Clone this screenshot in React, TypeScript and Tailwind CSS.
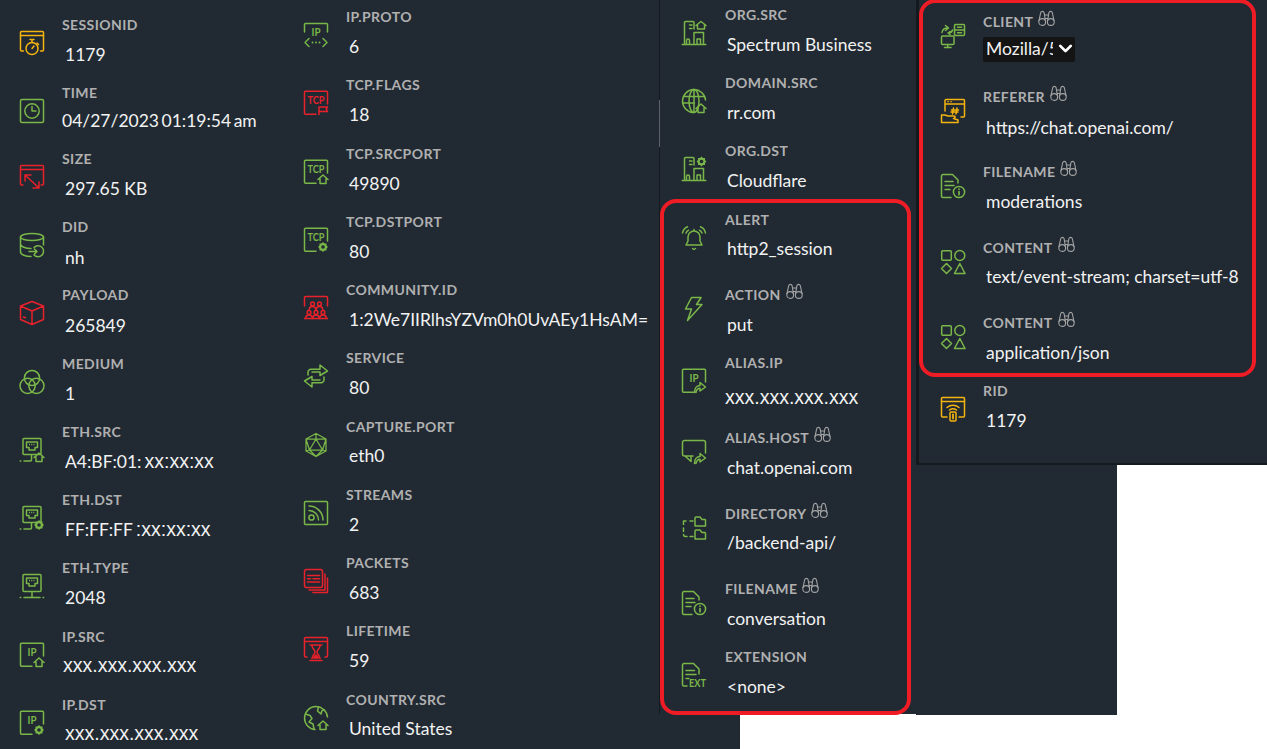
import type { ReactNode } from "react";
import { ChevronDown } from "lucide-react";

const GREEN = "text-[#7ab648]";
const RED = "text-[#e8212b]";
const YELLOW = "text-[#f5b40f]";
const BG = "#212a33";

function Svg({ color, children }: { color: string; children: ReactNode }) {
  return (
    <svg
      width="24"
      height="24"
      viewBox="0 0 24 24"
      fill="none"
      stroke="currentColor"
      strokeWidth="1.5"
      strokeLinecap="round"
      strokeLinejoin="round"
      className={`shrink-0 overflow-visible ${color}`}
      aria-hidden="true"
    >
      {children}
    </svg>
  );
}

// small badge text inside the protocol icons
function Tag({ x, y, w, children }: { x: number; y: number; w: number; children: string }) {
  return (
    <text
      x={x}
      y={y}
      fontSize="12"
      fontWeight="700"
      fontFamily="Lato, sans-serif"
      fill="currentColor"
      stroke="none"
      textLength={w}
      lengthAdjust="spacingAndGlyphs"
    >
      {children}
    </text>
  );
}

const Home = () => <path d="M14 19.5 19 15l5 4.5M16 18.5V23.5h6v-5" />;

const Gear = ({ cx = 19, cy = 19 }: { cx?: number; cy?: number }) => (
  <>
    <rect x={cx - 3.5} y={cy - 3.5} width="7" height="7" fill="currentColor" stroke="none" />
    <rect x={cx - 3.5} y={cy - 3.5} width="7" height="7" fill="currentColor" stroke="none" transform={`rotate(45 ${cx} ${cy})`} />
    <circle cx={cx} cy={cy} r="1.8" fill={BG} stroke="none" />
  </>
);

const Forward = () => (
  <path d="M12.5 23.5c0-4.5 2.5-7 5.5-7v-3l5.5 4.5-5.5 4v-2.8c-2 0-3.5 1.3-4 4.3" />
);

const Frame = () => <path d="M12 23.3H1.5a1 1 0 0 1-1-1v-21a1 1 0 0 1 1-1h21a1 1 0 0 1 1 1V13" />;

const Window = () => (
  <>
    <path d="M3 20H1.5a1 1 0 0 1-1-1V1.5a1 1 0 0 1 1-1h21a1 1 0 0 1 1 1V19a1 1 0 0 1-1 1H21" />
    <path d="M.5 4.5h23" />
  </>
);

const Port = ({ h = 17 }: { h?: number }) => (
  <>
    <rect x="3" y=".5" width="18" height={h} rx="1" />
    <path d="M6.5 4h11v5.5h-2.5V12H9V9.5H6.5z" />
    <path d="M9 6.5h6" strokeDasharray="1 1.2" strokeLinecap="butt" />
  </>
);

const Person = ({ x, y }: { x: number; y: number }) => (
  <>
    <circle cx={x} cy={y} r="1.9" />
    <path d={`M${x - 3.3} ${y + 6}c0-4.6 6.6-4.6 6.6 0`} />
  </>
);

const Globe = () => <path d="M23.5 11A11.5 11.5 0 1 0 11 23.5" />;

const Building = () => (
  <>
    <path d="M2.5 23V1.5a1 1 0 0 1 1-1H11a1 1 0 0 1 1 1V8M.2 23.5h23.6M12 23V11.5h9.5V23" />
    <path d="M7.5 4H10M7.5 7.5H10M4.5 23v-3.5a1.5 1.5 0 0 1 3 0V23M15 23v-5h3.5v5" />
  </>
);

const Doc = () => <path d="M10 23.5H2a1.5 1.5 0 0 1-1.5-1.5V2A1.5 1.5 0 0 1 2 .5h9.5L17 6v3" />;

const Shapes = () => (
  <>
    <rect x=".7" y=".7" width="9.6" height="9.6" rx="1" />
    <circle cx="18.8" cy="5.5" r="5" />
    <path d="M5.5 13.5 10.5 18.5 5.5 23.5.5 18.5zM18.8 13.5l5.2 10H13.5z" />
  </>
);

const FileInfo = () => (
  <Svg color={GREEN}>
    <Doc />
    <path d="M4 7.5h8M4 11.5h9M4 15.5h5" />
    <circle cx="18" cy="18" r="5.6" />
    <path d="M18 17.5v3.2" strokeWidth="1.7" />
    <path d="M18 15v.2" strokeWidth="1.7" />
  </Svg>
);

const Contents = () => (
  <Svg color={GREEN}>
    <Shapes />
  </Svg>
);

const icons: Record<string, ReactNode> = {
  session: (
    <Svg color={YELLOW}>
      <path d="M3.5 20H1.5a1 1 0 0 1-1-1V1.5a1 1 0 0 1 1-1h21a1 1 0 0 1 1 1V19a1 1 0 0 1-1 1h-2" />
      <path d="M.5 4.5h23" />
      <circle cx="12" cy="17.5" r="6" />
      <path d="M10 8.5h4M12 8.5v3M12 17.5l2-2.5M17 12l1.5 1.5" />
    </Svg>
  ),
  time: (
    <Svg color={GREEN}>
      <rect x=".5" y=".5" width="23" height="23" rx="1.5" />
      <circle cx="12" cy="12" r="7.2" />
      <path d="M12 7.5V12h4" />
    </Svg>
  ),
  size: (
    <Svg color={RED}>
      <Window />
      <path d="M5 10l14 13M5 16v-6h6M19 17v6h-6" />
    </Svg>
  ),
  did: (
    <Svg color={GREEN}>
      <ellipse cx="12" cy="4" rx="11.5" ry="3.6" />
      <path d="M.5 4v15c0 2.5 5 4.5 10.5 4.5M23.5 4v8M.5 11c0 2.5 5 4.6 10.5 4.6" />
      <path d="M14 14.5a5.5 5.5 0 1 1 0 7.5M9 18.5h8M14.5 16l2.5 2.5-2.5 2.5" />
    </Svg>
  ),
  payload: (
    <Svg color={RED}>
      <path d="M12 .5 23.5 5v13.5L12 23.5.5 18.5V5zM.5 5 12 10l11.5-5M12 10v13.5M3.5 16l2 .8" />
    </Svg>
  ),
  medium: (
    <Svg color={GREEN}>
      <circle cx="12" cy="8" r="7.6" />
      <circle cx="7.6" cy="15.8" r="7.6" />
      <circle cx="16.4" cy="15.8" r="7.6" />
    </Svg>
  ),
  ethSrc: (
    <Svg color={GREEN}>
      <Port h={16} />
      <path d="M.2 23h.6M4 23h6.5a1 1 0 0 0 1-1v-5" />
      <Home />
    </Svg>
  ),
  ethDst: (
    <Svg color={GREEN}>
      <Port h={16} />
      <path d="M.2 23h.6M4 23h6.5a1 1 0 0 0 1-1v-5" />
      <Gear />
    </Svg>
  ),
  ethType: (
    <Svg color={GREEN}>
      <Port h={17} />
      <path d="M12 18v5M.2 23.4h.6M4 23.4h16M23 23.4h.6" />
    </Svg>
  ),
  ipSrc: (
    <Svg color={GREEN}>
      <Frame />
      <Tag x={7.5} y={13} w={9}>IP</Tag>
      <Home />
    </Svg>
  ),
  ipDst: (
    <Svg color={GREEN}>
      <Frame />
      <Tag x={7.5} y={13} w={9}>IP</Tag>
      <Gear />
    </Svg>
  ),
  ipProto: (
    <Svg color={GREEN}>
      <path d="M.5 9V1.5a1 1 0 0 1 1-1h21a1 1 0 0 1 1 1V9" />
      <Tag x={7.5} y={12.5} w={9}>IP</Tag>
      <path d="M5 15.5 1 19.5l4 4M19 15.5l4 4-4 4" />
      <path d="M8.5 19.5h.1M12 19.5h.1M15.5 19.5h.1" strokeWidth="1.8" />
    </Svg>
  ),
  tcpFlags: (
    <Svg color={RED}>
      <Frame />
      <Tag x={3.5} y={13} w={17}>TCP</Tag>
      <path d="M15 23.5V16h8.5l-1.3 2.2 1.3 2.3H15" />
    </Svg>
  ),
  tcpSrc: (
    <Svg color={GREEN}>
      <Frame />
      <Tag x={3.5} y={13} w={17}>TCP</Tag>
      <Home />
    </Svg>
  ),
  tcpDst: (
    <Svg color={GREEN}>
      <Frame />
      <Tag x={3.5} y={13} w={17}>TCP</Tag>
      <Gear />
    </Svg>
  ),
  community: (
    <Svg color={RED}>
      <path d="M.5 10V1.5a1 1 0 0 1 1-1h21a1 1 0 0 1 1 1V10" />
      <Person x={8.5} y={8} />
      <Person x={15.5} y={8} />
      <Person x={5} y={16.5} />
      <Person x={12} y={16.5} />
      <Person x={19} y={16.5} />
      <path d="M.5 22.5h23" />
    </Svg>
  ),
  service: (
    <Svg color={GREEN}>
      <path d="M4 11V8.5a3 3 0 0 1 3-3.2h9V1l7.5 6-7.5 4.5V8H8" />
      <path d="M20 13v2.5a3 3 0 0 1-3 3.2H8V23L.5 17 8 12.5V16h8" />
    </Svg>
  ),
  capture: (
    <Svg color={GREEN}>
      <path d="M12 .5 22 6v12l-10 5.5L2 18V6zM12 6l6.5 11h-13zM12 .5V6M2 6h20M2 6l3.5 11M22 6l-3.5 11M2 18l3.5-1M22 18l-3.5-1M12 23.5 5.5 17M12 23.5 18.5 17" strokeWidth="1.25" />
    </Svg>
  ),
  streams: (
    <Svg color={GREEN}>
      <rect x=".5" y=".5" width="23" height="23" rx="1" />
      <circle cx="7.5" cy="16.5" r="2.6" />
      <path d="M5 9.5a9.5 9.5 0 0 1 9.5 9.5M5 5a14 14 0 0 1 14 14" />
    </Svg>
  ),
  packets: (
    <Svg color={RED}>
      <rect x=".5" y=".5" width="18" height="18" rx="2" />
      <path d="M3.5 6.5h12M3.5 13h12M3.5 9.8h3M9 9.8h6.5" />
      <path d="M21 5v16H5M23.5 9v14.5H9" />
    </Svg>
  ),
  lifetime: (
    <Svg color={RED}>
      <path d="M3 20H1.5a1 1 0 0 1-1-1V1.5a1 1 0 0 1 1-1h21a1 1 0 0 1 1 1V19a1 1 0 0 1-1 1H21" />
      <path d="M.5 4.5h23M6 8h12M6 23.5h12M8 8.5c0 3.5 3 4 3 6.5s-3 3-3 6.5M16 8.5c0 3.5-3 4-3 6.5s3 3 3 6.5" />
      <path d="M9.5 21h5l-2.5-3z" fill="currentColor" />
    </Svg>
  ),
  country: (
    <Svg color={GREEN}>
      <Globe />
      <path d="M1.5 8 6 9.5 8 12.5 5 16l4 2 1 5M14.5 1l-1 4 3.5 3 1-3.5L20.5 4" />
      <Home />
    </Svg>
  ),
  orgSrc: (
    <Svg color={GREEN}>
      <Building />
      <path d="M14 4.5 19 .5l5 4M15.5 3.5V8h7V3.5" />
    </Svg>
  ),
  domain: (
    <Svg color={GREEN}>
      <Globe />
      <ellipse cx="12" cy="12" rx="5" ry="11.5" />
      <path d="M12 .5v23M1.5 7.5h21M.5 14h12" />
      <Home />
    </Svg>
  ),
  orgDst: (
    <Svg color={GREEN}>
      <Building />
      <Gear cx={19.5} cy={4.5} />
    </Svg>
  ),
  alert: (
    <Svg color={GREEN}>
      <path d="M12 5a6 6 0 0 1 6 6v4l2 4H4l2-4v-4a6 6 0 0 1 6-6zM10.5 22.5l1.5 1 1.5-1M12 3.5V5" />
      <path d="M.5 7C1 4 3 2 5.5.8M23.5 7C23 4 21 2 18.5.8M4 7c.4-1.2 1.2-2 2.5-2.8M20 7c-.4-1.2-1.2-2-2.5-2.8" />
    </Svg>
  ),
  action: (
    <Svg color={GREEN}>
      <path d="M9.5.5h9.5l-4.5 7H20L5.5 23.5l4-11.5H3.5z" />
    </Svg>
  ),
  aliasIp: (
    <Svg color={GREEN}>
      <Frame />
      <Tag x={7.5} y={12.5} w={9}>IP</Tag>
      <Forward />
    </Svg>
  ),
  aliasHost: (
    <Svg color={GREEN}>
      <path d="M11 16H2.5a2 2 0 0 1-2-2V2.5a2 2 0 0 1 2-2h19a2 2 0 0 1 2 2V13M3 16l6 5.5M9 16v5.5" />
      <Forward />
    </Svg>
  ),
  directory: (
    <Svg color={GREEN}>
      <path d="M1.5 5v3.5M1.5 12v3.5M1.5 18.5a2 2 0 0 0 2 2H5M1.5 5H4M8 5h3M8 20.5h3" />
      <path d="M13 10V2a1 1 0 0 1 1-1h4l2 2.5h3a1 1 0 0 1 .5.9V10zM13 23v-8a1 1 0 0 1 1-1h4l2 2.5h3a1 1 0 0 1 .5.9V23z" />
    </Svg>
  ),
  filename: <FileInfo />,
  extension: (
    <Svg color={GREEN}>
      <path d="M5 23H2a1.5 1.5 0 0 1-1.5-1.5V2A1.5 1.5 0 0 1 2 .5h9.5L17 6v5" />
      <path d="M4 7.5h8.5M4 11.5h10M4 15.5h3" />
      <Tag x={7} y={24} w={17}>EXT</Tag>
    </Svg>
  ),
  client: (
    <Svg color={GREEN}>
      <rect x=".5" y="12" width="12.5" height="8.5" rx="1" />
      <path d="M6.7 20.5v3M3.5 23.5h6.5" />
      <rect x="13.5" y=".5" width="10" height="11" rx="1" />
      <path d="M13.5 6h10M16.5 3.3h4M16.5 8.8h4" />
      <path d="M1 8.5c.5-3 2.5-4.5 5.5-4.5M4.5 1.5 7.5 4 4.5 6.5M11.5 6c-.5 2-2 3-4 3M9 7.5 7 9l2 1.5" />
    </Svg>
  ),
  referer: (
    <Svg color={YELLOW}>
      <path d="M4 12V1.5a1 1 0 0 1 1-1h17.5a1 1 0 0 1 1 1V17a1 1 0 0 1-1 1H20M4 5h19.5M7 2.8h.1M10 2.8h.1" />
      <path d="M12.5 9l-1 6M16 9l-1 6M10.5 11h7M10 13h7" />
      <path d="M.5 16h3.5l3 1h6c1.5 0 1.5 2-.5 2.5L17 21v2.5H.5z" />
    </Svg>
  ),
  content: <Contents />,
  rid: (
    <Svg color={YELLOW}>
      <path d="M6 20H1.5a1 1 0 0 1-1-1V1.5a1 1 0 0 1 1-1h21a1 1 0 0 1 1 1V19a1 1 0 0 1-1 1H18" />
      <path d="M.5 4.5h23M6 10.5c3.5-3 8.5-3 12 0M8.5 13c2-1.5 5-1.5 7 0" />
      <rect x="9" y="15" width="6" height="9" rx="1" />
      <path d="M12 17.5v4" strokeWidth="1.8" />
    </Svg>
  ),
};

function Binoculars() {
  return (
    <svg
      width="17"
      height="17"
      viewBox="0 0 17 17"
      fill="none"
      stroke="#a3a3a3"
      strokeWidth="1.1"
      className="ml-[5px] -mt-[2px] shrink-0"
      aria-hidden="true"
    >
      <circle cx="4.2" cy="12" r="3.4" />
      <circle cx="12.8" cy="12" r="3.4" />
      <path d="M.9 11 2.7 2.6a1.8 1.8 0 0 1 3.4 0L7.6 12M16.1 11 14.3 2.6a1.8 1.8 0 0 0-3.4 0L9.4 12M7 5h3M7.3 8.5h2.4" />
    </svg>
  );
}

type Field = {
  label: string;
  value: ReactNode;
  icon: string;
  h: string;
  search?: boolean;
  valueClass?: string;
};

const Masked = () => (
  <span className="font-['Liberation_Sans',sans-serif] text-[19.5px]">xxx.xxx.xxx.xxx</span>
);

const MaskedMac = ({ children }: { children: string }) => (
  <span className="ml-[3px] font-['Liberation_Sans',sans-serif] text-[19.5px]">{children}</span>
);

const col1: Field[] = [
  { label: "SESSIONID", value: "1179", icon: "session", h: "h-[68px]" },
  { label: "TIME", value: "04/27/2023 01:19:54 am", icon: "time", h: "h-[66px]", valueClass: "mt-[5px] ml-0 [word-spacing:-2px]" },
  { label: "SIZE", value: "297.65 KB", icon: "size", h: "h-[68px]" },
  { label: "DID", value: "nh", icon: "did", h: "h-[68px]", valueClass: "mt-2 ml-[3px]" },
  { label: "PAYLOAD", value: "265849", icon: "payload", h: "h-[69px]", valueClass: "mt-2 ml-[3px]" },
  { label: "MEDIUM", value: "1", icon: "medium", h: "h-[68px]" },
  { label: "ETH.SRC", value: <>A4:BF:01:<MaskedMac>xx:xx:xx</MaskedMac></>, icon: "ethSrc", h: "h-[68px]" },
  { label: "ETH.DST", value: <>FF:FF:FF<MaskedMac>:xx:xx:xx</MaskedMac></>, icon: "ethDst", h: "h-[68px]" },
  { label: "ETH.TYPE", value: "2048", icon: "ethType", h: "h-[69px]" },
  { label: "IP.SRC", value: <Masked />, icon: "ipSrc", h: "h-[68px]", valueClass: "mt-[6px] ml-px" },
  { label: "IP.DST", value: <Masked />, icon: "ipDst", h: "h-[68px]", valueClass: "mt-[6px] ml-[3px]" },
];

const col2: Field[] = [
  { label: "IP.PROTO", value: "6", icon: "ipProto", h: "h-[68px]" },
  { label: "TCP.FLAGS", value: "18", icon: "tcpFlags", h: "h-[69px]" },
  { label: "TCP.SRCPORT", value: "49890", icon: "tcpSrc", h: "h-[68px]" },
  { label: "TCP.DSTPORT", value: "80", icon: "tcpDst", h: "h-[68px]" },
  { label: "COMMUNITY.ID", value: "1:2We7IIRlhsYZVm0h0UvAEy1HsAM=", icon: "community", h: "h-[68px]" },
  { label: "SERVICE", value: "80", icon: "service", h: "h-[69px]" },
  { label: "CAPTURE.PORT", value: "eth0", icon: "capture", h: "h-[68px]", valueClass: "mt-[6px] ml-[3px]" },
  { label: "STREAMS", value: "2", icon: "streams", h: "h-[68px]" },
  { label: "PACKETS", value: "683", icon: "packets", h: "h-[68px]" },
  { label: "LIFETIME", value: "59", icon: "lifetime", h: "h-[69px]" },
  { label: "COUNTRY.SRC", value: "United States", icon: "country", h: "h-[68px]", valueClass: "mt-[6px] ml-[3px]" },
];

const col3: Field[] = [
  { label: "ORG.SRC", value: "Spectrum Business", icon: "orgSrc", h: "h-[68px]" },
  { label: "DOMAIN.SRC", value: "rr.com", icon: "domain", h: "h-[68px]" },
  { label: "ORG.DST", value: "Cloudflare", icon: "orgDst", h: "h-[69px]" },
  { label: "ALERT", value: "http2_session", icon: "alert", h: "h-[75px]", valueClass: "mt-[6px] ml-0.5" },
  { label: "ACTION", value: "put", icon: "action", h: "h-[68px]", search: true },
  { label: "ALIAS.IP", value: <Masked />, icon: "aliasIp", h: "h-[75px]", valueClass: "mt-3 ml-0" },
  { label: "ALIAS.HOST", value: "chat.openai.com", icon: "aliasHost", h: "h-[76px]", search: true },
  { label: "DIRECTORY", value: "/backend-api/", icon: "directory", h: "h-[75px]", search: true, valueClass: "mt-[6px] ml-0.5" },
  { label: "FILENAME", value: "conversation", icon: "filename", h: "h-[68px]", search: true },
  { label: "EXTENSION", value: "<none>", icon: "extension", h: "h-[68px]" },
];

const col4: Field[] = [
  { label: "CLIENT", value: null, icon: "client", h: "h-[75px]", search: true },
  { label: "REFERER", value: "https://chat.openai.com/", icon: "referer", h: "h-[75px]", search: true, valueClass: "mt-2 ml-[3px]" },
  { label: "FILENAME", value: "moderations", icon: "filename", h: "h-[76px]", search: true },
  { label: "CONTENT", value: "text/event-stream; charset=utf-8", icon: "content", h: "h-[75px]", search: true, valueClass: "mt-[6px] ml-[3px]" },
  { label: "CONTENT", value: "application/json", icon: "content", h: "h-[68px]", search: true },
  { label: "RID", value: "1179", icon: "rid", h: "h-[68px]" },
];

function Row({ field, gap, valueClass }: { field: Field; gap: string; valueClass: string }) {
  return (
    <div className={`flex shrink-0 ${field.h}`}>
      <div className={field.search ? "mt-3" : "mt-4"}>{icons[field.icon]}</div>
      <div className={`flex min-w-0 flex-col ${gap}`}>
        <div className="flex h-5 items-start">
          <span className="text-[14px] leading-5 font-bold tracking-[0.4px] whitespace-nowrap text-[#b0b0b0]">
            {field.label}
          </span>
          {field.search && <Binoculars />}
        </div>
        {field.value === null ? (
          <div className="mt-[5px] flex h-[25px] w-[92px] items-center overflow-hidden rounded-[2px] bg-[#141414] pl-[3px] text-[17.5px] text-[#f2f2f2]">
            <span className="w-[67px] shrink-0 overflow-hidden whitespace-nowrap">Mozilla/5.0</span>
            <ChevronDown size={21} strokeWidth={3.2} className="-mt-0.5 ml-[2px] shrink-0 text-white" />
          </div>
        ) : (
          <div
            className={`flex h-6 items-center text-[17.5px] leading-6 whitespace-pre text-[#f2f2f2] ${
              typeof field.value === "string" ? "pt-0.5" : ""
            } ${field.valueClass ?? valueClass}`}
          >
            <span>{field.value}</span>
          </div>
        )}
      </div>
    </div>
  );
}

export default function App() {
  return (
    <div className="relative flex h-[749px] w-[1267px] overflow-hidden bg-white font-['Lato',sans-serif]">
      <div className="flex w-[290px] shrink-0 flex-col bg-[#212a33] pt-[15px] pl-5">
        {col1.map((f) => (
          <Row key={f.label} field={f} gap="ml-[18px]" valueClass="mt-[7px] ml-[3px]" />
        ))}
      </div>

      <div className="flex w-[369px] shrink-0 flex-col bg-[#212a33] pt-[7px] pl-[14px]">
        {col2.map((f) => (
          <Row key={f.label} field={f} gap="ml-[18px]" valueClass="mt-[7px] ml-[3px]" />
        ))}
      </div>

      <div className="flex w-[257px] shrink-0 flex-col">
        <div className="relative flex h-[714px] flex-col border-l border-[#14191e] bg-[#212a33] pt-[5px] pl-[22px]">
          <div className="absolute top-[100px] -left-px h-[47px] w-px bg-[#5d6266]" />
          {col3.map((f, i) => (
            <Row key={f.label + i} field={f} gap="ml-[19px]" valueClass="mt-[7px] ml-0.5" />
          ))}
        </div>
        <div className="h-[35px] w-[81px] bg-[#212a33]" />
      </div>

      <div className="flex min-w-0 flex-1 flex-col">
        <div className="flex h-[465px] flex-col border-b-2 border-l-[3px] border-[#14191e] bg-[#212a33] pt-3 pl-[22px]">
          {col4.map((f, i) => (
            <Row key={f.label + i} field={f} gap="ml-[18px]" valueClass="mt-[7px] ml-[3px]" />
          ))}
        </div>
        <div className="h-[250px] w-[201px] bg-[#212a33]" />
      </div>

      {/* red annotation boxes drawn over the fields */}
      <div className="pointer-events-none absolute top-[199px] left-[660px] h-[516px] w-[251px] rounded-[16px] border-[4px] border-[#ee1c25]" />
      <div className="pointer-events-none absolute -top-px left-[919px] h-[378px] w-[337px] rounded-[16px] border-[4px] border-[#ee1c25]" />
    </div>
  );
}
